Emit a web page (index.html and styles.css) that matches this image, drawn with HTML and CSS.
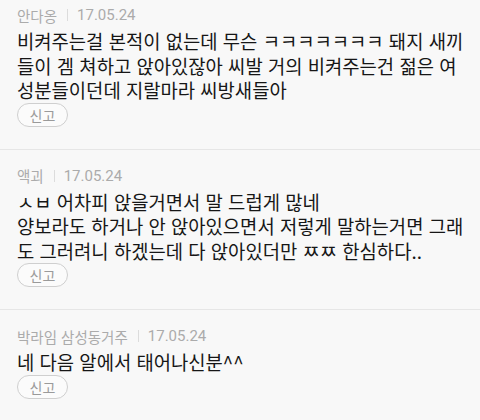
FILE: index.html
```html
<!DOCTYPE html>
<html lang="ko">
<head>
  <meta charset="UTF-8">
  <meta name="viewport" content="width=device-width, initial-scale=1.0">
  <title>댓글</title>
  <link rel="stylesheet" href="styles.css">
</head>
<body>
  <!-- Comment list -->
  <ul class="comment-list">
    <li class="comment">
      <div class="comment-meta">
        <span class="nick">안다옹</span>
        <span class="bar"></span>
        <span class="date">17.05.24</span>
      </div>
      <p class="comment-text">비켜주는걸 본적이 없는데 무슨 ㅋㅋㅋㅋㅋㅋㅋ 돼지 새끼 들이 겜 쳐하고 앉아있잖아 씨발 거의 비켜주는건 젊은 여성분들이던데 지랄마라 씨방새들아</p>
      <button class="report-btn" type="button">신고</button>
    </li>
    <li class="comment">
      <div class="comment-meta">
        <span class="nick">액괴</span>
        <span class="bar"></span>
        <span class="date">17.05.24</span>
      </div>
      <p class="comment-text">ㅅㅂ 어차피 앉을거면서 말 드럽게 많네<br>양보라도 하거나 안 앉아있으면서 저렇게 말하는거면 그래도 그러려니 하겠는데 다 앉아있더만 ㅉㅉ 한심하다..</p>
      <button class="report-btn" type="button">신고</button>
    </li>
    <li class="comment">
      <div class="comment-meta">
        <span class="nick">박라임 삼성동거주</span>
        <span class="bar"></span>
        <span class="date">17.05.24</span>
      </div>
      <p class="comment-text">네 다음 알에서 태어나신분^^</p>
      <button class="report-btn" type="button">신고</button>
    </li>
  </ul>
</body>
</html>
```

FILE: styles.css
```css
* {
    margin: 0;
    padding: 0;
    box-sizing: border-box;
}

body {
    background-color: #f8f8f8;
    font-family: "Noto Sans CJK KR", "Noto Sans", sans-serif;
    color: #222;
}

.comment-list {
    list-style: none;
}

/* One comment block */
.comment {
    padding: 16px 14px 22px 17px;
    border-bottom: 1px solid #e6e6e6;
}

.comment:first-child {
    padding-top: 5px; /* top of the list is cut off */
}

.comment-meta {
    display: flex;
    align-items: center;
    height: 20px;
    color: #ababab;
}

.comment-meta .nick {
    font-size: 14.5px;
}

.comment-meta .date {
    font-family: Roboto, sans-serif;
    font-size: 15px;
}

.comment-meta .bar {
    width: 1px;
    height: 12px;
    margin: 0 9px 0 10px;
    background-color: #dcdcdc;
}

.comment-text {
    margin-top: 4px;
    font-size: 18.8px;
    line-height: 24.5px;
    color: #161616;
}

.report-btn {
    display: block;
    width: 51px;
    height: 24px;
    border: 1px solid #cfcfcf;
    border-radius: 12px;
    background-color: #fbfbfb;
    font-family: "Noto Sans CJK KR", sans-serif;
    font-size: 14px;
    color: #9a9a9a;
    cursor: pointer;
}
```
